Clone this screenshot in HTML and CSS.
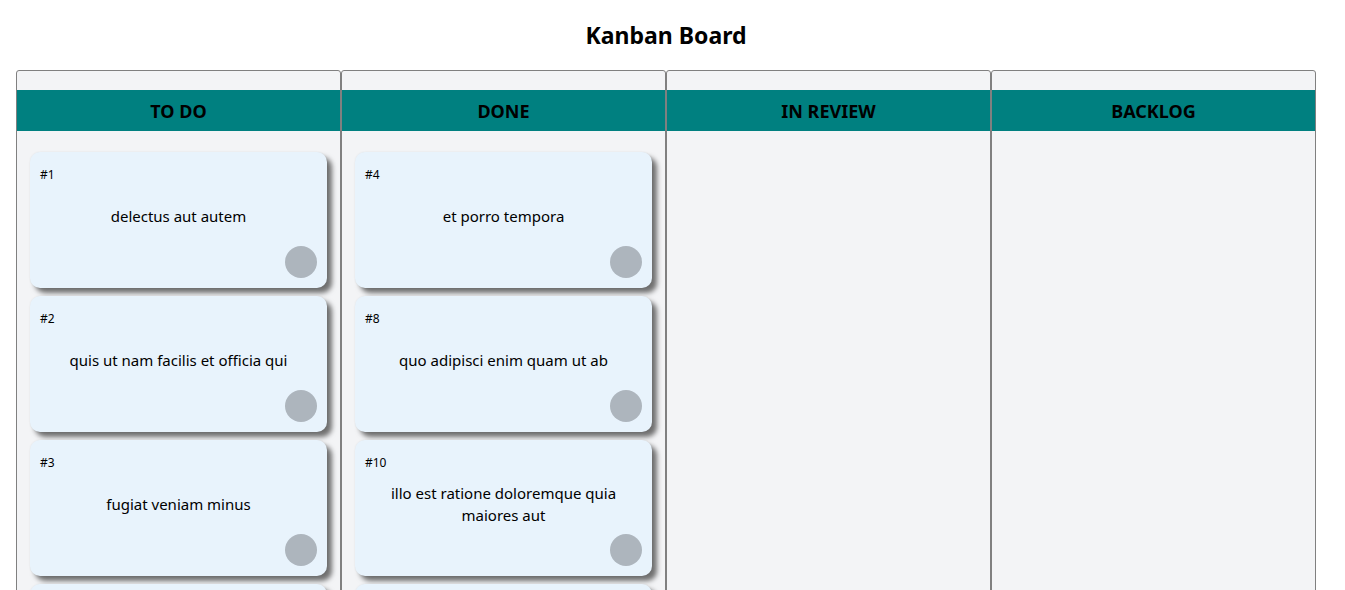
FILE: index.html
```html
<!DOCTYPE html>
<html lang="en">
<head>
<meta charset="utf-8">
<title>Kanban Board</title>
<link rel="stylesheet" href="styles.css">
</head>
<body>
<div class="app">
  <h1 class="title">Kanban Board</h1>
  <div class="board">
    <section class="column">
      <div class="column-top"></div>
      <h2 class="column-header">TO DO</h2>
      <div class="column-body">
        <div class="card"><span class="card-id">#1</span><p class="card-title">delectus aut autem</p><div class="card-foot"><span class="avatar"></span></div></div>
        <div class="card"><span class="card-id">#2</span><p class="card-title">quis ut nam facilis et officia qui</p><div class="card-foot"><span class="avatar"></span></div></div>
        <div class="card"><span class="card-id">#3</span><p class="card-title">fugiat veniam minus</p><div class="card-foot"><span class="avatar"></span></div></div>
        <div class="card"><span class="card-id">#5</span><p class="card-title">laboriosam mollitia et enim quasi adipisci quia provident illum</p><div class="card-foot"><span class="avatar"></span></div></div>
        <div class="card"><span class="card-id">#6</span><p class="card-title">qui ullam ratione quibusdam voluptatem quia omnis</p><div class="card-foot"><span class="avatar"></span></div></div>
        <div class="card"><span class="card-id">#7</span><p class="card-title">illo expedita consequatur quia in</p><div class="card-foot"><span class="avatar"></span></div></div>
      </div>
    </section>
    <section class="column">
      <div class="column-top"></div>
      <h2 class="column-header">DONE</h2>
      <div class="column-body">
        <div class="card"><span class="card-id">#4</span><p class="card-title">et porro tempora</p><div class="card-foot"><span class="avatar"></span></div></div>
        <div class="card"><span class="card-id">#8</span><p class="card-title">quo adipisci enim quam ut ab</p><div class="card-foot"><span class="avatar"></span></div></div>
        <div class="card"><span class="card-id">#10</span><p class="card-title">illo est ratione doloremque quia maiores aut</p><div class="card-foot"><span class="avatar"></span></div></div>
        <div class="card"><span class="card-id">#11</span><p class="card-title">vero rerum temporibus dolor</p><div class="card-foot"><span class="avatar"></span></div></div>
      </div>
    </section>
    <section class="column">
      <div class="column-top"></div>
      <h2 class="column-header">IN REVIEW</h2>
      <div class="column-body"></div>
    </section>
    <section class="column">
      <div class="column-top"></div>
      <h2 class="column-header">BACKLOG</h2>
      <div class="column-body"></div>
    </section>
  </div>
</div>
</body>
</html>
```

FILE: styles.css
```css
html, body {
  margin: 0;
  padding: 0;
  background: #ffffff;
}

::-webkit-scrollbar {
  width: 5px;
}
::-webkit-scrollbar-track {
  background: #f1f1f1;
}
::-webkit-scrollbar-thumb {
  background: #c1c1c1;
}

body {
  font-family: "Noto Sans", "Open Sans", sans-serif;
  color: #000;
}

.app {
  width: 1300px;
  padding: 0 16px 20px;
}

.title {
  margin: 0;
  padding: 20px 0 0;
  height: 70px;
  box-sizing: border-box;
  text-align: center;
  font-size: 23px;
  font-weight: 700;
  line-height: 30px;
}

.board {
  display: grid;
  grid-template-columns: repeat(4, 1fr);
}

.column {
  border: 1px solid #808080;
  border-radius: 3px 3px 0 0;
  background: #f3f4f6;
  display: flex;
  flex-direction: column;
}

.column-top {
  height: 19px;
}

.column-header {
  margin: 0;
  height: 41px;
  background: #008080;
  display: flex;
  align-items: center;
  justify-content: center;
  font-size: 18px;
  font-weight: 700;
}

.column-body {
  padding: 21px 13px 20px;
  display: flex;
  flex-direction: column;
  gap: 8px;
  min-height: 900px;
  box-sizing: border-box;
}

.card {
  height: 136px;
  box-sizing: border-box;
  padding: 10px;
  background: #e8f3fc;
  border-radius: 10px;
  box-shadow: 0 0 2px rgba(0, 0, 0, 0.08), 5px 5px 5px #707070;
  display: flex;
  flex-direction: column;
}

.card-id {
  font-size: 12px;
  line-height: 20px;
  margin-top: 3px;
}

.card-title {
  flex: 1;
  margin: 0;
  display: flex;
  align-items: center;
  justify-content: center;
  text-align: center;
  font-size: 15px;
  line-height: 22px;
  padding: 0 10px;
}

.card-foot {
  display: flex;
  justify-content: flex-end;
}

.avatar {
  width: 32px;
  height: 32px;
  border-radius: 50%;
  background: #adb5bd;
}
```
